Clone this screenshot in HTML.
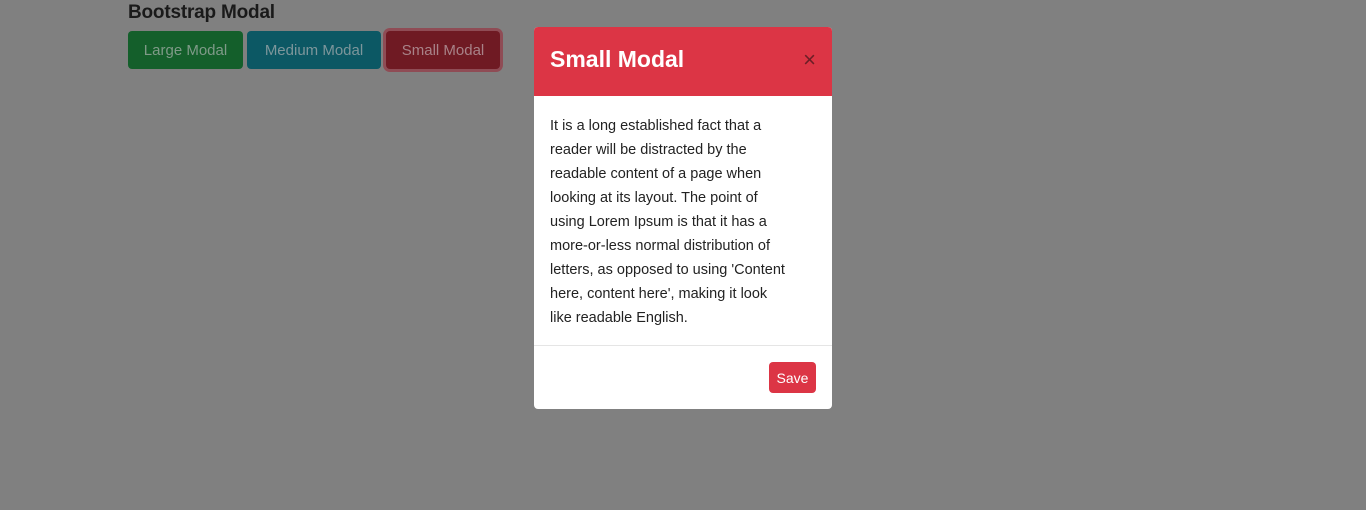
<!DOCTYPE html>
<html><head><style>
body{margin:0;width:1366px;height:510px;background:#808080;font-family:"Liberation Sans",sans-serif;position:relative;overflow:hidden}
h1{position:absolute;left:128px;top:2px;margin:0;font-size:19px;font-weight:bold;color:#1a1a1a;letter-spacing:-0.2px}
.b{position:absolute;top:31px;height:38px;border-radius:4px;font-size:15px;line-height:40px;text-align:center}
.m{position:absolute;left:534px;top:27px;width:298px;height:382px;background:#fff;border-radius:4px;overflow:hidden}
.hd{height:69px;background:#dc3545;position:relative}
.hd h2{margin:0;position:absolute;left:16px;top:19px;color:#fff;font-size:23px;font-weight:bold}
.x{position:absolute;right:16px;top:20px;color:#6b1e26;font-size:22px}
.bd{padding:18px 16px 0;font-size:14.5px;line-height:24px;color:#222;white-space:nowrap;height:231px}
.ft{border-top:1px solid #e5e5e5;height:63px;position:relative}
.sv{position:absolute;right:16px;top:16px;width:47px;height:31px;background:#dc3545;color:#fff;border-radius:4px;font-size:14px;line-height:32px;text-align:center}
</style></head><body>
<h1>Bootstrap Modal</h1>
<div class="b" style="left:128px;width:115px;background:#145f2b;color:#7f9a88">Large Modal</div>
<div class="b" style="left:247px;width:134px;background:#0c5864;color:#7d969b">Medium Modal</div>
<div class="b" style="left:386px;width:114px;background:#6f1a23;color:#a88288;box-shadow:0 0 0 3px #8f4c55">Small Modal</div>
<div class="m">
<div class="hd"><h2>Small Modal</h2><span class="x">×</span></div>
<div class="bd">It is a long established fact that a<br>reader will be distracted by the<br>readable content of a page when<br>looking at its layout. The point of<br>using Lorem Ipsum is that it has a<br>more-or-less normal distribution of<br>letters, as opposed to using 'Content<br>here, content here', making it look<br>like readable English.</div>
<div class="ft"><div class="sv">Save</div></div>
</div>
</body></html>
